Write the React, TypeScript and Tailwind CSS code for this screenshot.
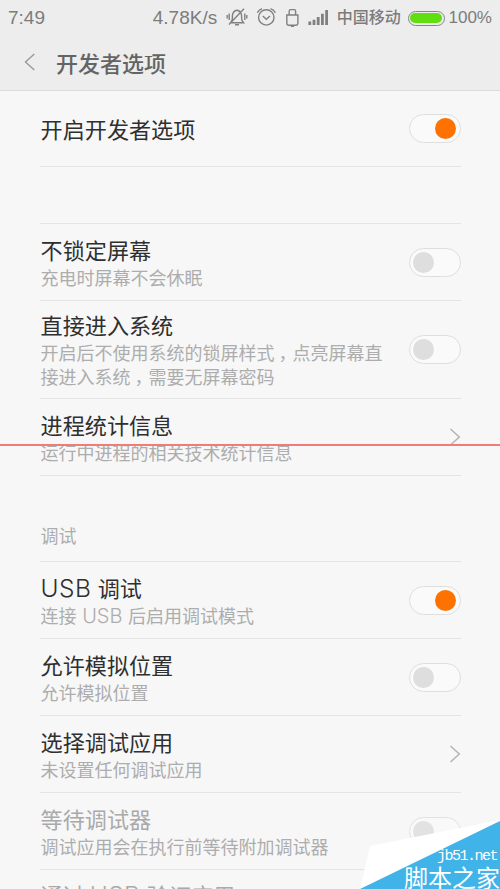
import React from 'react';

type Control = 'on' | 'off' | 'link' | 'disabled';

function Toggle({ on, disabled = false }: { on: boolean; disabled?: boolean }) {
  return (
    <div
      className={`flex h-[29px] w-[52px] shrink-0 items-center rounded-full border border-[#dedede] bg-[#fafafa] pr-[4px] pl-[3px] ${on ? 'justify-end' : 'justify-start'} ${disabled ? 'opacity-80' : ''}`}
    >
      <div className={`size-[21px] rounded-full ${on ? 'bg-[#ff7200]' : 'bg-[#dedede]'}`} />
    </div>
  );
}

function Chevron() {
  return (
    <svg className="h-[18px] w-[12px] shrink-0" viewBox="0 0 12 18" fill="none" stroke="#b4b4b4" strokeWidth="1.5">
      <path d="M1.5 1L10.3 9L1.5 17" />
    </svg>
  );
}

function Row({
  title,
  summary,
  control,
  height,
  pad,
}: {
  title: React.ReactNode;
  summary?: React.ReactNode;
  control: Control;
  height: string;
  pad: string;
}) {
  const muted = control === 'disabled';
  return (
    <div className={`flex shrink-0 items-center justify-between border-b border-[#e4e4e4] ${height}`}>
      <div className={`flex w-[350px] flex-col self-start pl-[0.6px] ${pad}`}>
        <div className={`h-[31px] text-[22.1px] leading-[30px] whitespace-nowrap ${muted ? 'text-[#a9a9a9]' : 'text-[#2f2f2f]'}`}>{title}</div>
        {summary && <div className="text-[18px] leading-[24px] whitespace-nowrap text-[#adadad]">{summary}</div>}
      </div>
      {control === 'link' ? <Chevron /> : <Toggle on={control === 'on'} disabled={muted} />}
    </div>
  );
}

function UsbTitle() {
  return <span className="mr-[1.5px] font-['Inter','Liberation_Sans',sans-serif] text-[24.5px] leading-none font-[350] tracking-[0.4px]">USB</span>;
}

function UsbSummary() {
  return <span className="mx-[1.5px] font-['Inter','Liberation_Sans',sans-serif] text-[20px] leading-none font-light">USB</span>;
}

function Comma() {
  return <span className="inline-block w-[18px] pl-[4px] tracking-[-4px]">，</span>;
}

function StatusBar() {
  return (
    <div className="flex h-[36px] shrink-0 items-center pr-[8px] pl-[8px] font-['Liberation_Sans','Noto_Sans_CJK_SC',sans-serif] text-[19px] text-[#7c7c7c]">
      <span className="w-[145px]">7:49</span>
      <span className="w-[73px] whitespace-nowrap">4.78K/s</span>
      <svg className="h-[24px] w-[104px] shrink-0" viewBox="226 6 104 24" fill="none" stroke="#808080" strokeWidth="1.4">
        <path d="M230.5 22.8Q232.4 21 232.4 18V15.5Q233 10.7 237 10.2Q241 10.7 241.6 15.5V18Q241.6 21 243.5 22.8H230.5M229 24.5L244 8.8M235 24.8H239M229.2 13.5V20M227.2 15V18.5M244.8 13.5V20M246.8 15V18.5" />
        <circle cx="266.3" cy="17.4" r="7.7" />
        <path d="M262.8 16L266.3 19.2L270 16M257.3 12.8Q258.8 9.6 262 8.6M275.4 12.8Q274 9.6 270.6 8.6" />
        <path d="M286.8 15H297.9V23Q297.9 25.2 295.7 25.2H289Q286.8 25.2 286.8 23ZM289.2 15V11Q289.2 9.6 290.6 9.6H294.2Q295.6 9.6 295.6 11V15M290.8 26.2H294" />
        <path d="M309.8 25V21.4M314 25V19.8M318.2 25V17M322.4 25V13.7M326.6 25V10" strokeWidth="2.8" />
      </svg>
      <span className="ml-[7px] w-[71px] text-[16px] font-medium whitespace-nowrap">中国移动</span>
      <div className="mr-[4px] flex h-[15px] w-[37px] shrink-0 rounded-full border-[1.5px] border-[#858585] p-[1.5px]">
        <div className="flex-1 rounded-full bg-[#61de10]" />
      </div>
      <span className="text-[17px]">100%</span>
    </div>
  );
}

function Watermark() {
  return (
    <div className="absolute right-0 bottom-0 h-[69px] w-[140px]">
      <svg className="h-full w-full" viewBox="0 0 140 69">
        <path d="M10 26L140 0V69H0Z" fill="#fff" />
        <path d="M0 69L140 1V69Z" fill="#40b3e8" />
      </svg>
      <div className="absolute right-[3px] bottom-[25px] font-['Liberation_Mono',monospace] text-[15px] leading-[15px] tracking-[-1.5px] text-white">jb51.net</div>
      <div className="absolute right-0 bottom-0 font-['Noto_Sans_CJK_SC',sans-serif] text-[24px] leading-[24px] whitespace-nowrap text-white">脚本之家</div>
    </div>
  );
}

export default function App() {
  return (
    <div className="relative flex h-[889px] w-[500px] flex-col overflow-hidden bg-[#f7f7f7] font-['Noto_Sans_CJK_SC',sans-serif]">
      <header className="flex h-[91px] shrink-0 flex-col border-b border-[#dcdcdc] bg-[#ededed]">
        <StatusBar />
        <div className="flex h-[52px] items-center pl-[24px]">
          <svg className="h-[18px] w-[12px]" viewBox="0 0 12 18" fill="none" stroke="#999" strokeWidth="1.4">
            <path d="M10.3 1L1.5 9L10.3 17" />
          </svg>
          <h1 className="-mt-[1px] ml-[20px] text-[22px] leading-[30px] font-medium text-[#646464]">开发者选项</h1>
        </div>
      </header>
      <main className="flex flex-col pr-[39px] pl-[40px]">
        <Row title="开启开发者选项" control="on" height="h-[76px]" pad="pt-[22px]" />
        <div className="h-[57px] border-b border-[#e4e4e4]" />
        <Row title="不锁定屏幕" summary="充电时屏幕不会休眠" control="off" height="h-[77px]" pad="pt-[10px]" />
        <Row
          title="直接进入系统"
          summary={<>开启后不使用系统的锁屏样式<Comma />点亮屏幕直<br />接进入系统<Comma />需要无屏幕密码</>}
          control="off"
          height="h-[98px]"
          pad="pt-[8px]"
        />
        <Row title="进程统计信息" summary="运行中进程的相关技术统计信息" control="link" height="h-[77px]" pad="pt-[10px]" />
        <div className="flex h-[86px] border-b border-[#e4e4e4] pt-[47px] pl-[0.6px] text-[18px] leading-[24px] text-[#adadad]">调试</div>
        <Row title={<><UsbTitle /> 调试</>} summary={<>连接 <UsbSummary /> 后启用调试模式</>} control="on" height="h-[77px]" pad="pt-[10px]" />
        <Row title="允许模拟位置" summary="允许模拟位置" control="off" height="h-[77px]" pad="pt-[10px]" />
        <Row title="选择调试应用" summary="未设置任何调试应用" control="link" height="h-[77px]" pad="pt-[10px]" />
        <Row title="等待调试器" summary="调试应用会在执行前等待附加调试器" control="disabled" height="h-[77px]" pad="pt-[10px]" />
        <Row title={<>通过 <UsbTitle /> 验证应用</>} control="disabled" height="h-[77px]" pad="pt-[9px]" />
      </main>
      <div className="absolute top-[444px] left-0 h-[2px] w-full bg-[#f07c78]" />
      <Watermark />
    </div>
  );
}
